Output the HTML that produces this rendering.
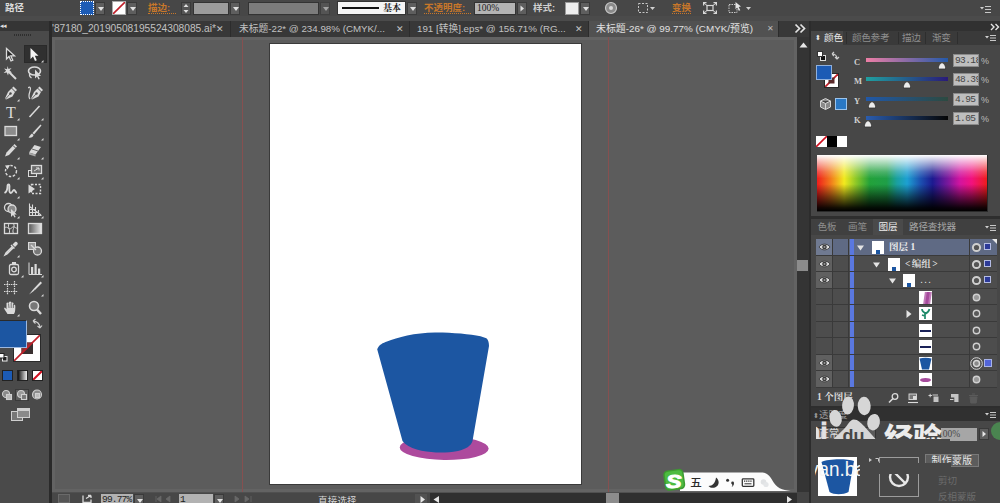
<!DOCTYPE html>
<html><head><meta charset="utf-8">
<style>
*{box-sizing:border-box;margin:0;padding:0}
html,body{width:1000px;height:503px;overflow:hidden;background:#5c5c5c;font-family:"Liberation Sans","Noto Sans CJK SC",sans-serif;font-size:11px;color:#d6d6d6}
.a{position:absolute}
#topbar{left:0;top:0;width:1000px;height:16px;background:#474747}
#topline{left:0;top:16px;width:1000px;height:5px;background:#4b4b4b}
#tabbar{left:0;top:21px;width:1000px;height:16px;background:#383838}
.tab{top:0;height:16px;font-size:9.75px;line-height:16px;color:#c2c2c2;white-space:nowrap;overflow:hidden;border-right:1px solid #2c2c2c}
#tools{left:0;top:21px;width:49px;height:482px;background:#4a4a4a}
#toolhead{left:0;top:21px;width:49px;height:10px;background:#353535}
#toolsep{left:49px;top:21px;width:3px;height:482px;background:#2a2a2a}
#canvas{left:52px;top:37px;width:744.500px;height:455px;background:#5c5c5c;border:3px solid #636363}
#artboard{left:269px;top:43px;width:313px;height:442px;background:#fff;border:1px solid #3a3a3a}
.guide{top:37px;width:1px;height:455px;background:#865050}
#vscroll{left:796.500px;top:37px;width:13.500px;height:466px;background:#343434}
#status{left:52px;top:492px;width:745px;height:11px;background:#474747;border-top:1px solid #505050}
#rsep{left:809px;top:21px;width:2px;height:482px;background:#2c2c2c}
#right{left:811px;top:21px;width:189px;height:482px;background:#474747}
.o{color:#c8772a}
.lbl{top:1px;font-size:9.5px;line-height:14px;white-space:nowrap;font-weight:700}
.dd{top:2px;width:10px;height:13px;background:#5e5e5e;border:1px solid #3a3a3a}
.dd:after{content:"";position:absolute;left:1.5px;top:4px;border:3px solid transparent;border-top:4px solid #e0e0e0}
.box{top:2px;height:13px;border:1px solid #333}
.ptab{top:0;height:14px;font-size:9.6px;line-height:14px;color:#8e8e8e;white-space:nowrap}
.val{width:26px;height:13px;background:#bebebe;border:1px solid #8a8a8a;color:#444;font-family:"Liberation Mono",monospace;font-size:9.5px;line-height:11px;letter-spacing:-0.6px;padding-left:1px;overflow:hidden;white-space:nowrap}
.pct{font-size:9px;color:#bbb;line-height:12px}
.sl{height:4px;left:866px;width:82px}
.cl{font-family:"Liberation Serif",serif;font-weight:bold;font-size:8.5px;color:#d0d0d0;line-height:10px}
.row{left:816px;width:181px;height:17px;border-bottom:1px solid #3a3a3a}
</style></head><body>
<div class="a" id="topbar"></div>
<div class="a" id="topline"></div>
<div class="a" id="tabbar"></div>
<div class="a" id="tools"></div>
<div class="a" id="toolhead"></div>
<div class="a" id="toolsep"></div>

<div class="a" style="left:52px;top:21px;width:758px;height:16px">
<div class="a tab" style="left:0;width:179px;padding-left:0;font-size:10.200px">'87180_20190508195524308085.ai*<span style="font-size:9px">✕</span></div>
<div class="a tab" style="left:179px;width:179px;padding-left:8px">未标题-22* @ 234.98% (CMYK/...<span class="a" style="right:5px;top:0;font-size:9px">✕</span></div>
<div class="a tab" style="left:358px;width:179px;padding-left:7px">191 [转换].eps* @ 156.71% (RG...<span class="a" style="right:5px;top:0;font-size:9px">✕</span></div>
<div class="a tab" style="left:537px;width:190px;padding-left:7px;background:#515151;color:#e0e0e0;height:16px;font-size:9.880px;border-right:1px solid #2c2c2c">未标题-26* @ 99.77% (CMYK/预览)<span class="a" style="right:4px;top:0;font-size:8px;color:#bbb">✕</span></div>
<svg class="a" style="left:742px;top:2px" width="14" height="12"><path d="M1.500 1.500L5.500 5.500L1.500 9.500M6.500 1.500L10.500 5.500L6.500 9.500" fill="none" stroke="#e4e4e4" stroke-width="1.700"/></svg>
</div>

<div class="a" id="canvas"></div>
<div class="a guide" style="left:242px"></div>
<div class="a guide" style="left:608px"></div>
<div class="a" id="artboard"></div>
<svg class="a" style="left:0;top:0" width="1000" height="503">
<ellipse cx="444.200" cy="448" rx="44.500" ry="12" fill="#ad4a9d" transform="rotate(.8 444 448)"/>
<path d="M377.200 349.300C379 344.500 383 343 387 341.500C397 337.300 415 332.600 435 332.400C452 332.300 470 334 480.500 336.300L486.400 338.200C488.500 340 489 343 489 346L472.500 441C471 446 466 449 458 451C450 452.500 443 452.600 436 452.400C424 452 408 449 402.500 441Z" fill="#1c56a2"/>
</svg>


<div class="a lbl" style="left:5px;color:#dcdcdc">路径</div>
<div class="a" style="left:80px;width:14px;height:14px;top:1px;background:#1c5bb5;border:1px dotted #fff"></div>
<div class="a dd" style="left:95px"></div>
<div class="a" style="left:112px;width:14px;height:14px;top:1px;background:#fff;border:1px solid #aaa;overflow:hidden"><svg width="14" height="14" style="position:absolute;left:-1px;top:-1px"><line x1="0" y1="14" x2="14" y2="0" stroke="#c0202a" stroke-width="1.6"/></svg></div>
<div class="a dd" style="left:127px"></div>
<div class="a lbl o" style="left:148px;border-bottom:1px dotted #c8772a;height:13px">描边<span style="display:inline-block;width:9px">:</span></div>
<div class="a" style="left:181px;top:2px;width:10px;height:13px;background:#555;border:1px solid #3a3a3a"><svg width="8" height="11" style="display:block"><path d="M1.5 4L4 1L6.500 4Z M1.500 7L4 10L6.500 7Z" fill="#ddd"/></svg></div>
<div class="a box" style="left:193px;width:36px;background:#9c9c9c"></div>
<div class="a dd" style="left:230px"></div>
<div class="a box" style="left:248px;width:71px;background:#7c7c7c"></div>
<div class="a dd" style="left:320px;opacity:.6"></div>
<div class="a box" style="left:337px;width:69px;background:#f4f4f4;height:14px;top:1px"><div class="a" style="left:4px;top:5px;width:37px;height:2px;background:#111"></div><div class="a" style="left:45px;top:-1px;font-family:'Liberation Serif','Noto Serif CJK SC',serif;font-weight:bold;font-size:9px;line-height:14px;color:#222;white-space:nowrap">基本</div></div>
<div class="a dd" style="left:407px"></div>
<div class="a lbl o" style="left:424px;border-bottom:1px dotted #c8772a;height:13px">不透明度<span style="display:inline-block;width:9px">:</span></div>
<div class="a box" style="left:474px;width:42px;background:#b4b4b4;color:#222;font-family:'Liberation Serif',serif;font-size:9.500px;line-height:11px;padding-left:2px">100%</div>
<div class="a" style="left:517px;top:2px;width:10px;height:13px;background:#5e5e5e;border:1px solid #3a3a3a"><svg width="8" height="11" style="display:block"><path d="M2.500 2.500L6 5.500L2.500 8.500Z" fill="#e0e0e0"/></svg></div>
<div class="a lbl" style="left:533px;color:#d0d0d0">样式<span style="display:inline-block;width:9px">:</span></div>
<div class="a" style="left:565px;width:14px;height:13px;top:2px;background:#eee;border:1px solid #999"></div>
<div class="a dd" style="left:580px"></div>
<svg class="a" style="left:600px;top:0" width="400" height="18">
<circle cx="11" cy="8" r="5.500" fill="#8a8a8a" stroke="#c8c8c8" stroke-width="1.200"/><circle cx="11" cy="8" r="2" fill="#d8d8d8"/>
<rect x="38.500" y="3.500" width="9" height="9" fill="none" stroke="#c8c8c8" stroke-dasharray="2 1.500"/><path d="M50 7l5 0l-2.500 3z" fill="#d0d0d0"/>
<g transform="translate(-2.500 0)"><path d="M105.500 2h3.500v1.300h-2.200v2.200h-1.300zM119.500 2h-3.500v1.300h2.200v2.200h1.300zM105.500 14h3.500v-1.300h-2.200v-2.200h-1.300zM119.500 14h-3.500v-1.300h2.200v-2.200h1.300z" fill="#d8d8d8"/><path d="M106.500 3l3 2.500M118.500 3l-3 2.500M106.500 13l3-2.500M118.500 13l-3-2.500" stroke="#d8d8d8"/><rect x="109.500" y="5.500" width="6" height="5" fill="none" stroke="#d8d8d8" stroke-width="1.200"/></g>
<g transform="translate(-3.500 0)"><rect x="132.500" y="4.500" width="8" height="8" fill="none" stroke="#c8c8c8" stroke-dasharray="1.500 1"/><path d="M139 2l5.500 4.500l-2.300 .5l1.600 3.200l-1.500 .6l-1.600-3.200l-1.700 1.600z" fill="#e4e4e4"/></g><path d="M146 7l5 0l-2.500 3z" fill="#d0d0d0"/>
<path d="M380 7l4 0l-2 2.500z" fill="#d0d0d0"/><path d="M385 6.500h6M385 9.500h6M385 12.500h6" stroke="#c8c8c8"/>
</svg>
<div class="a lbl o" style="left:672px;border-bottom:1px dotted #c8772a;height:13px">变换</div>

<div class="a" style="left:0;top:22px;font-size:7px;line-height:8px;color:#ddd;letter-spacing:-1px">◂◂</div>
<div class="a" style="left:14px;top:34px;width:17px;height:2px;border-top:1px dotted #2e2e2e;border-bottom:1px dotted #2e2e2e"></div>
<div class="a" style="left:24px;top:45px;width:23px;height:18px;background:#303030;border:1px solid #2a2a2a"></div>
<svg class="a" style="left:2px;top:46px" width="18" height="18" viewBox="0 0 18 18"><path d="M4.500 2.500L4.500 13L7 10.500L9 15L10.800 14.200L8.800 9.800L12.500 9.800Z" fill="#2a2a2a" stroke="#dadada" stroke-width="1.300"/></svg>
<svg class="a" style="left:26px;top:45px" width="18" height="18" viewBox="0 0 18 18"><path d="M4.500 3L4.500 14L7 11.500L9 16L10.800 15.200L8.800 10.800L12.500 10.800Z" fill="#f4f4f4"/><path d="M15 17.500l2.500 0l0-2.500z" fill="#dadada"/></svg>
<svg class="a" style="left:2px;top:64px" width="18" height="18" viewBox="0 0 18 18"><path d="M6 7L14 15" stroke="#dadada" stroke-width="2"/><path d="M5.500 2l1 3l3-1l-2 2.500l2.500 2l-3.200 0l-.8 3l-1.200-3l-3.200 .5l2.500-2.200l-2-2.300l3 .8z" fill="#dadada"/></svg>
<svg class="a" style="left:26px;top:64px" width="18" height="18" viewBox="0 0 18 18"><ellipse cx="8.500" cy="7" rx="6" ry="4" fill="none" stroke="#dadada" stroke-width="1.600"/><path d="M4 9c-1 2 0 4 1.500 5" fill="none" stroke="#dadada" stroke-width="1.300"/><path d="M9 5.500l0 9l2-2l1.500 3l1.300-.6l-1.500-3l2.700 0z" fill="#dadada"/></svg>
<svg class="a" style="left:2px;top:84px" width="18" height="18" viewBox="0 0 18 18"><path d="M11.500 2.500L15 6L13.500 7.500L10 4Z" fill="#dadada"/><path d="M9.500 4.500L13 8L10.500 12.500L4 15.500L3 14.500L6 8Z" fill="#dadada"/><circle cx="8.500" cy="9.500" r="1.200" fill="#4a4a4a"/><path d="M3.500 15L8 10" stroke="#4a4a4a" stroke-width=".8"/><path d="M15 17.500l2.500 0l0-2.500z" fill="#dadada"/></svg>
<svg class="a" style="left:28px;top:84px" width="18" height="18" viewBox="0 0 18 18"><path d="M11.500 2.500L15 6L13.500 7.500L10 4Z" fill="#dadada"/><path d="M9.500 4.500L13 8L10.500 12.500L4 15.500L3 14.500L6 8Z" fill="#dadada"/><circle cx="8.500" cy="9.500" r="1.200" fill="#4a4a4a"/><path d="M3.500 15L8 10" stroke="#4a4a4a" stroke-width=".8"/><path d="M1 4c2-2 3 0 2 3c-1 3-2 6 0 8" fill="none" stroke="#dadada" stroke-width="1.200" transform="translate(-1,0)"/></svg>
<svg class="a" style="left:2px;top:103px" width="18" height="18" viewBox="0 0 18 18"><text x="4" y="14.500" font-family="Liberation Serif,serif" font-size="16" fill="#dadada">T</text><path d="M15 17.500l2.500 0l0-2.500z" fill="#dadada"/></svg>
<svg class="a" style="left:26px;top:103px" width="18" height="18" viewBox="0 0 18 18"><path d="M3.500 14L13.500 3" stroke="#dadada" stroke-width="1.500"/><path d="M15 17.500l2.500 0l0-2.500z" fill="#dadada"/></svg>
<svg class="a" style="left:2px;top:123px" width="18" height="18" viewBox="0 0 18 18"><rect x="3" y="3.500" width="11.500" height="9" fill="#8c8c8c" stroke="#dadada" stroke-width="1.300"/><path d="M15 17.500l2.500 0l0-2.500z" fill="#dadada"/></svg>
<svg class="a" style="left:26px;top:123px" width="18" height="18" viewBox="0 0 18 18"><path d="M14.500 1.500L15.500 2.500L8 11.500L6.500 10Z" fill="#dadada"/><path d="M6 10.500L7.500 12c0 2-2.500 3-5 2.500c1.500-1 1.500-3 3.500-4z" fill="#dadada"/><path d="M15 17.500l2.500 0l0-2.500z" fill="#dadada"/></svg>
<svg class="a" style="left:2px;top:142px" width="18" height="18" viewBox="0 0 18 18"><path d="M12.500 2L15 4.500L7 13L3 14.500L4.500 10.500Z" fill="#dadada"/><path d="M11 3.500L13.500 6" stroke="#4a4a4a" stroke-width="1"/><path d="M15 17.500l2.500 0l0-2.500z" fill="#dadada"/></svg>
<svg class="a" style="left:26px;top:142px" width="18" height="18" viewBox="0 0 18 18"><path d="M8.500 3L15 5L9.500 12.500L3 10.500Z" fill="#dadada"/><path d="M3 10.500L9.500 12.500L9.500 14.500L3 12.500Z" fill="#a8a8a8"/><path d="M6 7L12 9" stroke="#4a4a4a" stroke-width=".8"/><path d="M15 17.500l2.500 0l0-2.500z" fill="#dadada"/></svg>
<svg class="a" style="left:2px;top:162px" width="18" height="18" viewBox="0 0 18 18"><circle cx="9" cy="9" r="5.500" fill="none" stroke="#dadada" stroke-width="1.400" stroke-dasharray="2.500 1.600"/><path d="M3 3.500L8 3L5.500 7.500Z" fill="#dadada"/><path d="M15 17.500l2.500 0l0-2.500z" fill="#dadada"/></svg>
<svg class="a" style="left:26px;top:162px" width="18" height="18" viewBox="0 0 18 18"><rect x="2.500" y="8.500" width="8" height="6" fill="none" stroke="#dadada"/><rect x="5.500" y="3.500" width="10" height="8" fill="#6a6a6a" stroke="#dadada" stroke-width="1.300"/><path d="M8 9L13 6M13 6l-3 0M13 6l0 2.500" stroke="#dadada" fill="none"/><path d="M15 17.500l2.500 0l0-2.500z" fill="#dadada"/></svg>
<svg class="a" style="left:2px;top:181px" width="18" height="18" viewBox="0 0 18 18"><path d="M2.500 12c2-1 3-4 3-7c0-2 2-2 2 0c0 3-1 6 1 7c2 .5 2-3 3.500-3c1.500 0 1 3 3 2.500" fill="none" stroke="#dadada" stroke-width="1.800"/><path d="M15 17.500l2.500 0l0-2.500z" fill="#dadada"/></svg>
<svg class="a" style="left:26px;top:181px" width="18" height="18" viewBox="0 0 18 18"><rect x="5.500" y="3.500" width="9" height="9" fill="none" stroke="#dadada" stroke-dasharray="2 1.500" stroke-width="1.400"/><path d="M2.500 3.500L9 8L2.500 12.500Z" fill="#dadada"/></svg>
<svg class="a" style="left:2px;top:201px" width="18" height="18" viewBox="0 0 18 18"><circle cx="6.500" cy="6.500" r="4" fill="none" stroke="#dadada" stroke-width="1.300"/><circle cx="10" cy="8" r="4" fill="#8a8a8a" stroke="#dadada" stroke-width="1.300"/><path d="M9 8l0 8l2-2l1.500 2.500l1.200-.6l-1.500-2.500l2.600 0z" fill="#dadada"/><path d="M15 17.500l2.500 0l0-2.500z" fill="#dadada"/></svg>
<svg class="a" style="left:26px;top:201px" width="18" height="18" viewBox="0 0 18 18"><path d="M3.500 2.500L3.500 14.500L15.500 14.500M3.500 5.500L15 14M6.500 3.500L6.500 14.500M9.500 6L9.500 14.500M12.500 9L12.500 14.500M3.500 8.500L10 8.500M3.500 11.500L13 11.500" stroke="#dadada" fill="none" stroke-width="1.100"/><path d="M15 17.500l2.500 0l0-2.500z" fill="#dadada"/></svg>
<svg class="a" style="left:2px;top:220px" width="18" height="18" viewBox="0 0 18 18"><rect x="2.500" y="3.500" width="13" height="10" fill="none" stroke="#dadada" stroke-width="1.300"/><path d="M2.500 8c3-3 4 3 7 0s4 1 6 0M7 3.500c-2 4 2 6 0 10M11.500 3.500c2 4-2 6 0 10" fill="none" stroke="#dadada"/></svg>
<svg class="a" style="left:26px;top:220px" width="18" height="18" viewBox="0 0 18 18"><defs><linearGradient id="tg"><stop offset="0" stop-color="#555"/><stop offset="1" stop-color="#e8e8e8"/></linearGradient></defs><rect x="2.500" y="3.500" width="13" height="10" fill="url(#tg)" stroke="#dadada" stroke-width="1.300"/></svg>
<svg class="a" style="left:2px;top:240px" width="18" height="18" viewBox="0 0 18 18"><path d="M13 2c1.500-1 3.500 1 2.500 2.500L13 7L10.500 4.500Z" fill="#dadada"/><path d="M9 5l3.500 3.500M10.500 6.500L4 13L3 15L5 14L11.500 7.500" stroke="#dadada" fill="none" stroke-width="1.400"/><path d="M15 17.500l2.500 0l0-2.500z" fill="#dadada"/></svg>
<svg class="a" style="left:26px;top:240px" width="18" height="18" viewBox="0 0 18 18"><rect x="2.500" y="2.500" width="7" height="7" fill="#9a9a9a" stroke="#dadada"/><circle cx="11.500" cy="11" r="4" fill="#777" stroke="#dadada" stroke-width="1.300"/><path d="M5 5l5 5" stroke="#dadada" stroke-width="1.200"/></svg>
<svg class="a" style="left:6px;top:260px" width="18" height="18" viewBox="0 0 18 18"><rect x="3.500" y="4.500" width="9" height="10" rx="1.500" fill="none" stroke="#dadada" stroke-width="1.300"/><circle cx="8" cy="9.500" r="2.300" fill="none" stroke="#dadada" stroke-width="1.300"/><rect x="6" y="2" width="4" height="2.500" fill="#dadada"/><path d="M15 17.500l2.500 0l0-2.500z" fill="#dadada"/></svg>
<svg class="a" style="left:26px;top:260px" width="18" height="18" viewBox="0 0 18 18"><path d="M3 2.500L3 14.500L16 14.500" stroke="#dadada" fill="none"/><rect x="5" y="7" width="2.200" height="7" fill="#dadada"/><rect x="8.500" y="4" width="2.200" height="10" fill="#dadada"/><rect x="12" y="8.500" width="2.200" height="5.500" fill="#dadada"/><path d="M15 17.500l2.500 0l0-2.500z" fill="#dadada"/></svg>
<svg class="a" style="left:2px;top:279px" width="18" height="18" viewBox="0 0 18 18"><path d="M5.500 2L5.500 16M12.500 2L12.500 16M2 5.500L16 5.500M2 12.500L16 12.500" stroke="#dadada" stroke-width="1.200" fill="none" stroke-dasharray="1.500 .8"/></svg>
<svg class="a" style="left:26px;top:279px" width="18" height="18" viewBox="0 0 18 18"><path d="M14.500 2.500L16 4L9 11L7 10.500Z" fill="#dadada"/><path d="M7.500 10L8.500 11.500L3 15.500Z" fill="#dadada"/><path d="M15 17.500l2.500 0l0-2.500z" fill="#dadada"/></svg>
<svg class="a" style="left:2px;top:299px" width="18" height="18" viewBox="0 0 18 18"><path d="M5.500 15c-1-2-3-4-3.500-6c.8-.8 1.800 0 2.500 1.200L4.500 4c.8-1 1.800-.6 2 .2L7 3c.8-1 2-.6 2.200 .3l.3 .7c.8-.8 2-.4 2 .6l0 1.400c.8-.6 1.800-.2 1.800 .8c0 3 .2 6-1.300 8.200z" fill="#dadada"/><path d="M6.500 4.500L7 9M9.200 4L9.200 9M11.500 5L11.300 9" stroke="#4a4a4a" stroke-width=".7"/><path d="M15 17.500l2.500 0l0-2.500z" fill="#dadada"/></svg>
<svg class="a" style="left:26px;top:299px" width="18" height="18" viewBox="0 0 18 18"><circle cx="8" cy="7" r="4.500" fill="#777" stroke="#dadada" stroke-width="1.600"/><path d="M11 10.500L15 15" stroke="#dadada" stroke-width="2.500"/></svg>
<div class="a" style="left:13px;top:334px;width:28px;height:28px;background:#fff;border:1px solid #2a2a2a;overflow:hidden"><svg width="26" height="26" style="display:block"><rect x="7.500" y="7.500" width="11.500" height="11.500" fill="#3a3030"/><path d="M7.500 7.500h11.500l-11.500 11.500z" fill="#8a3434"/><line x1="0" y1="26" x2="26" y2="0" stroke="#c0202a" stroke-width="1.600"/></svg></div>
<div class="a" style="left:-1px;top:320px;width:28px;height:27.500px;background:#1c56a2;border:1px solid #9cb8e0;border-top-color:#2a2a2a"></div>
<svg class="a" style="left:30px;top:318px" width="14" height="14"><path d="M3 3c4 0 7 3 7 7M3 3l2.500-2M3 3l2.500 2.500M10 10l-2.500-2M10 10l2-2.500" stroke="#d0d0d0" fill="none" stroke-width="1.200"/></svg>
<svg class="a" style="left:-1px;top:353px" width="10" height="10"><rect x="3.500" y="3.500" width="4.500" height="4.500" fill="#222" stroke="#eee"/><rect x=".5" y=".5" width="4.500" height="4.500" fill="#fff" stroke="#222"/></svg>
<div class="a" style="left:2px;top:370px;width:11px;height:11px;background:#1c5bb5;border:1px solid #222"></div>
<div class="a" style="left:17px;top:370px;width:11px;height:11px;background:linear-gradient(90deg,#111,#eee);border:1px solid #222"></div>
<div class="a" style="left:32px;top:370px;width:11px;height:11px;background:#fff;border:1px solid #222;overflow:hidden"><svg width="9" height="9" style="display:block"><line x1="0" y1="9" x2="9" y2="0" stroke="#d01020" stroke-width="2"/></svg></div>
<div class="a" style="left:15px;top:389px;width:14px;height:12px;background:#5c5c5c;border:1px solid #3a3a3a"></div>
<svg class="a" style="left:0;top:388px" width="48" height="14"><g fill="none" stroke="#cfcfcf" stroke-width="1.100"><circle cx="6" cy="6" r="3.500" fill="#8a8a8a"/><rect x="6.500" y="6.500" width="5" height="5" fill="#bbb"/><circle cx="21" cy="6" r="3.500" fill="#999"/><rect x="21.500" y="6.500" width="5" height="5" fill="#777"/><circle cx="37" cy="6.500" r="4.500" fill="#8a8a8a"/><rect x="35.500" y="5.500" width="4" height="4" fill="#bbb"/></g></svg>
<svg class="a" style="left:10px;top:407px" width="22" height="16"><rect x="1.500" y="4.500" width="11" height="9" fill="#777" stroke="#cfcfcf"/><rect x="7.500" y="1.500" width="12" height="9" fill="#8a8a8a" stroke="#cfcfcf"/><rect x="7.500" y="1.500" width="12" height="2.500" fill="#cfcfcf"/></svg>

<div class="a" id="vscroll"></div><div class="a" style="left:796.500px;top:492px;width:12.500px;height:11px;background:#444"></div>
<svg class="a" style="left:797px;top:37px" width="14" height="14"><path d="M2.500 10.500L6.500 5.500L10.500 10.500Z" fill="#e6e6e6"/></svg>
<div class="a" style="left:797px;top:260px;width:11px;height:11px;background:#8c8c8c"></div>
<div class="a" id="status"></div>
<div class="a" style="left:430px;top:493px;width:367px;height:10px;background:#2f2f2f"></div>
<div class="a" style="left:606px;top:493px;width:13px;height:10px;background:#8c8c8c"></div>
<svg class="a" style="left:52px;top:493px" width="760" height="10">
<rect x="6.500" y="1.500" width="11" height="8" fill="#555" stroke="#6a6a6a"/>
<path d="M31 2.500l0 7l8 0l0-3M34 5.500l5-3M39 2.500l-3 0M39 2.500l0 2.500" stroke="#d8d8d8" fill="none" stroke-width="1.300"/>
<path d="M104 3l0 6M109 3l-4 3l4 3zM118 3l-4 3l4 3z" fill="#686868" stroke="#686868" stroke-width=".8"/>
<path d="M183 3l4 3l-4 3zM193 3l4 3l-4 3zM199 3l0 6" fill="#686868" stroke="#686868" stroke-width=".8"/>
<rect x="363" y="1" width="12" height="10" fill="#525252"/><path d="M368.500 3L373 6.500L368.500 10Z" fill="#e6e6e6"/>
<path d="M387 3L381.500 6.500L387 10Z" fill="#e6e6e6"/>
<path d="M735 3L740 6.500L735 10Z" fill="#e6e6e6"/>
</svg>
<div class="a" style="left:101px;top:494px;width:32px;height:10px;background:#b2b2b2;color:#222;font-family:'Liberation Mono',monospace;font-size:9.500px;letter-spacing:-.8px;line-height:11px;padding-left:1px;overflow:hidden;white-space:nowrap">99.77%</div>
<div class="a dd" style="left:134px;top:494px;height:10px"></div>
<div class="a" style="left:179px;top:494px;width:34px;height:10px;background:#b2b2b2;color:#222;font-family:'Liberation Mono',monospace;font-size:9.500px;line-height:11px;padding-left:1px;overflow:hidden">1</div>
<div class="a dd" style="left:214px;top:494px;height:10px"></div>
<div class="a" style="left:318px;top:495px;font-size:9.500px;line-height:11px;color:#d8d8d8;letter-spacing:.2px;white-space:nowrap">直接选择</div>

<svg class="a" style="left:655px;top:462px" width="145" height="34" viewBox="655 462 145 34">
<path d="M680 472.500L761 472.500C768 472.500 770.500 477 774 483C778 489 785 491 794 491L680 491Z" fill="#fcfcfc"/>
<g transform="rotate(-8 674.200 479.800)">
<rect x="664" y="469.600" width="20.500" height="20.500" rx="4.500" fill="#3c9a30"/>
<rect x="665.500" y="471" width="17.500" height="17.500" rx="3.500" fill="#4dbb40"/>
</g>
<text x="666" y="487.600" font-family="Liberation Sans,sans-serif" font-weight="bold" font-style="italic" font-size="17.500" fill="#fff" stroke="#fff" stroke-width=".9" textLength="15.500" lengthAdjust="spacingAndGlyphs">S</text>
<text x="690.300" y="486.600" font-family="Noto Sans CJK SC,sans-serif" font-weight="500" font-size="11.500" fill="#2a2a2a">五</text>
<path d="M716 477.500C719.500 480 720 485.500 715 487.500C712.500 488.300 710 487.800 708.500 486C712.500 486 715.500 482.500 716 477.500Z" fill="#333"/>
<circle cx="727.600" cy="480.200" r="1.500" fill="#333"/><circle cx="732.600" cy="483" r="1.400" fill="#333"/><path d="M733.800 483C734.200 485 733 486.500 731.500 487C732.500 486 732.600 485 732 484Z" fill="#333"/>
<rect x="742.300" y="478.800" width="11.500" height="7.600" rx=".8" fill="none" stroke="#333" stroke-width="1.300"/><path d="M744 481.200h8.500" stroke="#333" stroke-width="1.200" stroke-dasharray="1.300 .8"/><path d="M744.500 483.800h7" stroke="#333" stroke-width="1"/>
<circle cx="763.500" cy="482" r="2.800" fill="#e0e2e4"/><circle cx="766" cy="484.500" r="2.600" fill="#e4e6e8"/>
</svg>

<div class="a" id="rsep"></div><div class="a" id="right"></div>
<div class="a" style="left:811px;top:21px;width:189px;height:10px;background:#313131"></div>
<svg class="a" style="left:990px;top:23px" width="10" height="8"><path d="M1 1L4 4L1 7M5.500 1L8.500 4L5.500 7" fill="none" stroke="#e4e4e4" stroke-width="1.400"/></svg>
<div class="a" style="left:811px;top:31px;width:189px;height:14px;background:#3a3a3a"></div>
<div class="a" style="left:811px;top:31px;width:32px;height:14px;background:#474747"></div>
<div class="a ptab" style="left:815px;top:31px;color:#e8e8e8"><span style="font-size:7px;position:relative;top:-1px;margin-right:3px">⬍</span>颜色</div>
<div class="a ptab" style="left:852px;top:31px;letter-spacing:-.3px">颜色参考</div>
<div class="a ptab" style="left:902px;top:31px;letter-spacing:-.3px">描边</div>
<div class="a ptab" style="left:932px;top:31px;letter-spacing:-.3px">渐变</div>
<div class="a" style="left:846px;top:32px;width:1px;height:12px;background:#2e2e2e"></div>
<div class="a" style="left:898px;top:32px;width:1px;height:12px;background:#2e2e2e"></div>
<div class="a" style="left:925px;top:32px;width:1px;height:12px;background:#2e2e2e"></div>
<div class="a" style="left:957px;top:32px;width:1px;height:12px;background:#2e2e2e"></div>
<svg class="a" style="left:984px;top:33px" width="14" height="10"><path d="M1 3l4 0l-2 2.500z" fill="#d0d0d0"/><path d="M6 2.500h6M6 5h6M6 7.500h6" stroke="#c8c8c8"/></svg>
<svg class="a" style="left:815px;top:49px" width="30" height="14"><rect x="5.500" y="6.500" width="5" height="5" fill="#111" stroke="#ddd"/><rect x="2.500" y="2.500" width="5" height="5" fill="#fff" stroke="#333"/><path d="M17 5c3 0 5 2 5 5M17 5l2-2M17 5l2 2M22 10l-2-2M22 10l2-2" stroke="#d0d0d0" fill="none" stroke-width="1.100"/></svg>
<div class="a" style="left:824px;top:73px;width:15px;height:15px;background:#fff;border:1px solid #2a2a2a;overflow:hidden"><svg width="13" height="13" style="display:block"><line x1="0" y1="13" x2="13" y2="0" stroke="#c0202a" stroke-width="1.800"/><rect x="3.500" y="3.500" width="6" height="6" fill="#5a2a2a"/></svg></div>
<div class="a" style="left:816px;top:65px;width:16px;height:15px;background:#1c5bb5;border:1px solid #8fb0dc"></div>
<svg class="a" style="left:819px;top:97px" width="13" height="14"><path d="M6.500 1.500L11.500 4L11.500 10L6.500 12.500L1.500 10L1.500 4Z M1.500 4L6.500 6.500L11.500 4M6.500 6.500L6.500 12.500" fill="#8a8a8a" stroke="#d6d6d6" stroke-width="1"/></svg>
<div class="a" style="left:835px;top:98px;width:12px;height:12px;background:#2a78c4;border:1px solid #9cc4ec"></div>

<div class="a cl" style="left:854px;top:57px">C</div>
<div class="a sl" style="top:58px;background:linear-gradient(90deg,#ee7ea6,#2459a8)"></div>
<svg class="a" style="left:937px;top:62px" width="10" height="8"><path d="M5 .5C7 2 8.500 3 8.500 5.500L8.500 7L1.500 7L1.500 5.500C1.500 3 3 2 5 .5Z" fill="#ececec" stroke="#333" stroke-width=".8"/></svg>
<div class="a cl" style="left:854px;top:76px">M</div>
<div class="a sl" style="top:77px;background:linear-gradient(90deg,#1fa0a0,#2a1a78)"></div>
<svg class="a" style="left:902px;top:81px" width="10" height="8"><path d="M5 .5C7 2 8.500 3 8.500 5.500L8.500 7L1.500 7L1.500 5.500C1.500 3 3 2 5 .5Z" fill="#ececec" stroke="#333" stroke-width=".8"/></svg>
<div class="a cl" style="left:854px;top:96px">Y</div>
<div class="a sl" style="top:97px;background:linear-gradient(90deg,#2058a8,#2c4a40)"></div>
<svg class="a" style="left:867px;top:101px" width="10" height="8"><path d="M5 .5C7 2 8.500 3 8.500 5.500L8.500 7L1.500 7L1.500 5.500C1.500 3 3 2 5 .5Z" fill="#ececec" stroke="#333" stroke-width=".8"/></svg>
<div class="a cl" style="left:854px;top:115px">K</div>
<div class="a sl" style="top:116px;background:linear-gradient(90deg,#2a5cae,#050505)"></div>
<svg class="a" style="left:863px;top:120px" width="10" height="8"><path d="M5 .5C7 2 8.500 3 8.500 5.500L8.500 7L1.500 7L1.500 5.500C1.500 3 3 2 5 .5Z" fill="#ececec" stroke="#333" stroke-width=".8"/></svg>
<div class="a val" style="left:953px;top:54px">93.18</div>
<div class="a pct" style="left:981px;top:55px">%</div>
<div class="a val" style="left:953px;top:73px">48.39</div>
<div class="a pct" style="left:981px;top:74px">%</div>
<div class="a val" style="left:953px;top:93px">4.95</div>
<div class="a pct" style="left:981px;top:94px">%</div>
<div class="a val" style="left:953px;top:112px">1.05</div>
<div class="a pct" style="left:981px;top:113px">%</div>
<div class="a" style="left:816px;top:136px;width:11px;height:11px;background:#fff;overflow:hidden"><svg width="11" height="11" style="display:block"><line x1="0" y1="11" x2="11" y2="0" stroke="#d01020" stroke-width="1.600"/></svg></div>
<div class="a" style="left:827px;top:136px;width:10px;height:11px;background:#000"></div>
<div class="a" style="left:837px;top:136px;width:10px;height:11px;background:#fff"></div>
<div class="a" style="left:817px;top:155px;width:171px;height:57px;background:#2a2a2a"><div class="a" style="left:0;top:0;width:170px;height:56px;background:linear-gradient(90deg,#ee1c1c 0%,#f27a1c 8%,#f2ea1e 16%,#8cc828 23%,#23a23a 31%,#1f9e48 41%,#1aa0a0 47%,#1da0d2 53%,#1c50b0 61%,#1c1a90 68%,#7a189c 77%,#d214a0 84%,#f2127e 91%,#ee1c1c 100%)"></div><div class="a" style="left:0;top:0;width:170px;height:56px;background:linear-gradient(180deg,#fff 0%,rgba(255,255,255,.72) 10%,rgba(255,255,255,.2) 30%,rgba(255,255,255,0) 42%,rgba(0,0,0,0) 52%,rgba(0,0,0,.5) 74%,rgba(0,0,0,.92) 94%,#000 100%)"></div></div>
<div class="a" style="left:811px;top:216px;width:189px;height:3px;background:#2e2e2e"></div>
<div class="a" style="left:811px;top:219px;width:189px;height:16px;background:#404040"></div>
<div class="a" style="left:873px;top:219px;width:30px;height:16px;background:#4a4a4a"></div>
<div class="a ptab" style="left:817.5px;top:220px">色板</div>
<div class="a ptab" style="left:848px;top:220px">画笔</div>
<div class="a ptab" style="left:878.5px;top:220px;color:#eee">图层</div>
<div class="a ptab" style="left:909px;top:220px;color:#a8a8a8;letter-spacing:-.2px">路径查找器</div>
<svg class="a" style="left:984px;top:223px" width="14" height="10"><path d="M1 3l4 0l-2 2.500z" fill="#d0d0d0"/><path d="M6 2.500h6M6 5h6M6 7.500h6" stroke="#c8c8c8"/></svg>
<div class="a row" style="top:239px;height:17px;background:#5f6a84"><div class="a" style="left:16px;top:0;width:1px;height:100%;background:#3a3a3a"></div><div class="a" style="left:32px;top:0;width:1px;height:100%;background:#3a3a3a"></div><div class="a" style="left:34px;top:0;width:4px;height:100%;background:#5a78e0"></div><div class="a" style="left:153px;top:0;width:1px;height:100%;background:#3a3a3a"></div><div class="a" style="left:0;top:0;width:16px;height:100%;background:rgba(255,255,255,.11)"></div><svg class="a" style="left:2px;top:3px" width="13" height="10"><path d="M1 5C3.500 1.200 9.500 1.200 12 5C9.500 8.800 3.500 8.800 1 5Z" fill="#dcdcdc" stroke="#2e2e2e" stroke-width=".8"/><circle cx="6.500" cy="5" r="2.300" fill="#3a3a3a"/><circle cx="6.500" cy="5" r="1" fill="#999"/></svg><svg class="a" style="left:41px;top:6px" width="7" height="6"><path d="M0 .5L7 .5L3.500 5.500Z" fill="#e4e4e4"/></svg><div class="a" style="left:56px;top:2px;width:12px;height:13px;background:#fff;overflow:hidden"><div class="a" style="left:4px;top:9px;width:4px;height:4px;background:#1c56a2"></div></div><div class="a" style="left:73px;top:1px;font-family:'Liberation Serif','Noto Serif CJK SC',serif;font-size:9.500px;line-height:14px;color:#eee;white-space:nowrap;font-weight:bold">图层 1</div><svg class="a" style="left:154px;top:2px" width="13" height="13"><circle cx="6.500" cy="6.500" r="3.600" fill="#555" stroke="#cfcfcf" stroke-width="2"/></svg><div class="a" style="left:168px;top:4px;width:7px;height:7px;background:#2c3a98;border:1px solid #b4bce4"></div></div>
<div class="a row" style="top:256px;height:16px;background:#4d4d4d"><div class="a" style="left:16px;top:0;width:1px;height:100%;background:#3a3a3a"></div><div class="a" style="left:32px;top:0;width:1px;height:100%;background:#3a3a3a"></div><div class="a" style="left:34px;top:0;width:4px;height:100%;background:#5a78e0"></div><div class="a" style="left:153px;top:0;width:1px;height:100%;background:#3a3a3a"></div><div class="a" style="left:0;top:0;width:16px;height:100%;background:rgba(255,255,255,.11)"></div><svg class="a" style="left:2px;top:3px" width="13" height="10"><path d="M1 5C3.500 1.200 9.500 1.200 12 5C9.500 8.800 3.500 8.800 1 5Z" fill="#dcdcdc" stroke="#2e2e2e" stroke-width=".8"/><circle cx="6.500" cy="5" r="2.300" fill="#3a3a3a"/><circle cx="6.500" cy="5" r="1" fill="#999"/></svg><svg class="a" style="left:57px;top:6px" width="7" height="6"><path d="M0 .5L7 .5L3.500 5.500Z" fill="#e4e4e4"/></svg><div class="a" style="left:72px;top:2px;width:12px;height:13px;background:#fff;overflow:hidden"><div class="a" style="left:4px;top:9px;width:4px;height:4px;background:#1c56a2"></div></div><div class="a" style="left:89px;top:1px;font-family:'Liberation Serif','Noto Serif CJK SC',serif;font-size:9.500px;line-height:14px;color:#ddd;white-space:nowrap;font-weight:bold;word-spacing:-1px">&lt; 编组 &gt;</div><svg class="a" style="left:154px;top:2px" width="13" height="13"><circle cx="6.500" cy="6.500" r="3.600" fill="#555" stroke="#cfcfcf" stroke-width="2"/></svg><div class="a" style="left:168px;top:4px;width:7px;height:7px;background:#2c3a98;border:1px solid #b4bce4"></div></div>
<div class="a row" style="top:272px;height:17px;background:#4d4d4d"><div class="a" style="left:16px;top:0;width:1px;height:100%;background:#3a3a3a"></div><div class="a" style="left:32px;top:0;width:1px;height:100%;background:#3a3a3a"></div><div class="a" style="left:34px;top:0;width:4px;height:100%;background:#5a78e0"></div><div class="a" style="left:153px;top:0;width:1px;height:100%;background:#3a3a3a"></div><div class="a" style="left:0;top:0;width:16px;height:100%;background:rgba(255,255,255,.11)"></div><svg class="a" style="left:2px;top:3px" width="13" height="10"><path d="M1 5C3.500 1.200 9.500 1.200 12 5C9.500 8.800 3.500 8.800 1 5Z" fill="#dcdcdc" stroke="#2e2e2e" stroke-width=".8"/><circle cx="6.500" cy="5" r="2.300" fill="#3a3a3a"/><circle cx="6.500" cy="5" r="1" fill="#999"/></svg><svg class="a" style="left:73px;top:6px" width="7" height="6"><path d="M0 .5L7 .5L3.500 5.500Z" fill="#e4e4e4"/></svg><div class="a" style="left:87px;top:2px;width:12px;height:13px;background:#fff;overflow:hidden"><div class="a" style="left:4px;top:9px;width:4px;height:4px;background:#1c56a2"></div></div><div class="a" style="left:104px;top:0px;font-size:11px;line-height:14px;color:#ddd;letter-spacing:1px">...</div><svg class="a" style="left:154px;top:2px" width="13" height="13"><circle cx="6.500" cy="6.500" r="3.600" fill="#555" stroke="#cfcfcf" stroke-width="2"/></svg><div class="a" style="left:168px;top:4px;width:7px;height:7px;background:#2c3a98;border:1px solid #b4bce4"></div></div>
<div class="a row" style="top:289px;height:16px;background:#4d4d4d"><div class="a" style="left:16px;top:0;width:1px;height:100%;background:#3a3a3a"></div><div class="a" style="left:32px;top:0;width:1px;height:100%;background:#3a3a3a"></div><div class="a" style="left:34px;top:0;width:4px;height:100%;background:#5a78e0"></div><div class="a" style="left:153px;top:0;width:1px;height:100%;background:#3a3a3a"></div><div class="a" style="left:103px;top:2px;width:13px;height:13px;background:#fff;overflow:hidden"><div class="a" style="left:5px;top:1px;width:7px;height:12px;background:#c07ab8;transform:skewX(-8deg)"></div><div class="a" style="left:7px;top:1px;width:3px;height:12px;background:#a64b9c;transform:skewX(-8deg)"></div></div><svg class="a" style="left:154px;top:2px" width="13" height="13"><circle cx="6.500" cy="6.500" r="3.200" fill="#9a9a9a" stroke="#d0d0d0" stroke-width="1.400"/></svg></div>
<div class="a row" style="top:305px;height:17px;background:#4d4d4d"><div class="a" style="left:16px;top:0;width:1px;height:100%;background:#3a3a3a"></div><div class="a" style="left:32px;top:0;width:1px;height:100%;background:#3a3a3a"></div><div class="a" style="left:34px;top:0;width:4px;height:100%;background:#5a78e0"></div><div class="a" style="left:153px;top:0;width:1px;height:100%;background:#3a3a3a"></div><svg class="a" style="left:89.5px;top:4.500px" width="6" height="8"><path d="M.5 0L5.500 4L.5 8Z" fill="#e4e4e4"/></svg><div class="a" style="left:103px;top:2px;width:13px;height:13px;background:#fff;overflow:hidden"><svg width="13" height="13"><path d="M6 12L6 5M6 6C4 5 3 4 3 2M6 7C8 6 10 4 10.500 2M6 9L3 8" stroke="#1f8a6a" stroke-width="1.700" fill="none"/></svg></div><svg class="a" style="left:154px;top:2px" width="13" height="13"><circle cx="6.500" cy="6.500" r="3.200" fill="#5a5a5a" stroke="#d0d0d0" stroke-width="1.400"/></svg></div>
<div class="a row" style="top:322px;height:16px;background:#4d4d4d"><div class="a" style="left:16px;top:0;width:1px;height:100%;background:#3a3a3a"></div><div class="a" style="left:32px;top:0;width:1px;height:100%;background:#3a3a3a"></div><div class="a" style="left:34px;top:0;width:4px;height:100%;background:#5a78e0"></div><div class="a" style="left:153px;top:0;width:1px;height:100%;background:#3a3a3a"></div><div class="a" style="left:103px;top:2px;width:13px;height:13px;background:#fff;overflow:hidden"><div class="a" style="left:1px;top:5.500px;width:11px;height:2px;background:#1a2258"></div></div><svg class="a" style="left:154px;top:2px" width="13" height="13"><circle cx="6.500" cy="6.500" r="3.200" fill="#5a5a5a" stroke="#d0d0d0" stroke-width="1.400"/></svg></div>
<div class="a row" style="top:338px;height:17px;background:#4d4d4d"><div class="a" style="left:16px;top:0;width:1px;height:100%;background:#3a3a3a"></div><div class="a" style="left:32px;top:0;width:1px;height:100%;background:#3a3a3a"></div><div class="a" style="left:34px;top:0;width:4px;height:100%;background:#5a78e0"></div><div class="a" style="left:153px;top:0;width:1px;height:100%;background:#3a3a3a"></div><div class="a" style="left:103px;top:2px;width:13px;height:13px;background:#fff;overflow:hidden"><div class="a" style="left:1px;top:5.500px;width:11px;height:2px;background:#1a2258"></div></div><svg class="a" style="left:154px;top:2px" width="13" height="13"><circle cx="6.500" cy="6.500" r="3.200" fill="#5a5a5a" stroke="#d0d0d0" stroke-width="1.400"/></svg></div>
<div class="a row" style="top:355px;height:16px;background:#4d4d4d"><div class="a" style="left:16px;top:0;width:1px;height:100%;background:#3a3a3a"></div><div class="a" style="left:32px;top:0;width:1px;height:100%;background:#3a3a3a"></div><div class="a" style="left:34px;top:0;width:4px;height:100%;background:#5a78e0"></div><div class="a" style="left:153px;top:0;width:1px;height:100%;background:#3a3a3a"></div><div class="a" style="left:0;top:0;width:16px;height:100%;background:rgba(255,255,255,.11)"></div><svg class="a" style="left:2px;top:3px" width="13" height="10"><path d="M1 5C3.500 1.200 9.500 1.200 12 5C9.500 8.800 3.500 8.800 1 5Z" fill="#dcdcdc" stroke="#2e2e2e" stroke-width=".8"/><circle cx="6.500" cy="5" r="2.300" fill="#3a3a3a"/><circle cx="6.500" cy="5" r="1" fill="#999"/></svg><div class="a" style="left:103px;top:2px;width:13px;height:13px;background:#fff;overflow:hidden"><svg width="13" height="13"><path d="M.5 1.500C4 .5 9 .5 12.500 1.500L10 12.500L3 12.500Z" fill="#1c56a2"/></svg></div><svg class="a" style="left:153px;top:1px" width="15" height="15"><circle cx="7.500" cy="7.500" r="5.800" fill="none" stroke="#d8d8d8" stroke-width="1"/><circle cx="7.500" cy="7.500" r="3" fill="#8a8a8a" stroke="#d8d8d8" stroke-width="1.500"/></svg><div class="a" style="left:168px;top:4px;width:8px;height:8px;background:#5264d8;border:1px solid #a8b4e8"></div></div>
<div class="a row" style="top:371px;height:17px;background:#4d4d4d"><div class="a" style="left:16px;top:0;width:1px;height:100%;background:#3a3a3a"></div><div class="a" style="left:32px;top:0;width:1px;height:100%;background:#3a3a3a"></div><div class="a" style="left:34px;top:0;width:4px;height:100%;background:#5a78e0"></div><div class="a" style="left:153px;top:0;width:1px;height:100%;background:#3a3a3a"></div><div class="a" style="left:0;top:0;width:16px;height:100%;background:rgba(255,255,255,.11)"></div><svg class="a" style="left:2px;top:3px" width="13" height="10"><path d="M1 5C3.500 1.200 9.500 1.200 12 5C9.500 8.800 3.500 8.800 1 5Z" fill="#dcdcdc" stroke="#2e2e2e" stroke-width=".8"/><circle cx="6.500" cy="5" r="2.300" fill="#3a3a3a"/><circle cx="6.500" cy="5" r="1" fill="#999"/></svg><div class="a" style="left:103px;top:2px;width:13px;height:13px;background:#fff;overflow:hidden"><div class="a" style="left:1px;top:4.500px;width:11px;height:4px;border-radius:50%;background:#a64b9c"></div></div><svg class="a" style="left:154px;top:2px" width="13" height="13"><circle cx="6.500" cy="6.500" r="3.200" fill="#9a9a9a" stroke="#d0d0d0" stroke-width="1.400"/></svg></div>
<svg class="a" style="left:992px;top:239px" width="5" height="5"><path d="M0 0L5 0L5 5Z" fill="#e8e8e8"/></svg>
<div class="a" style="left:811px;top:388px;width:189px;height:18px;background:#474747"></div>
<div class="a" style="left:817px;top:390px;font-family:'Liberation Serif','Noto Serif CJK SC',serif;font-size:9.500px;line-height:14px;color:#ddd;white-space:nowrap;font-weight:bold">1 个图层</div>
<svg class="a" style="left:885px;top:390px" width="100" height="16">
<circle cx="10" cy="6.500" r="2.800" fill="none" stroke="#dcdcdc" stroke-width="1.300"/><path d="M8 8.500L4 12.500" stroke="#dcdcdc" stroke-width="1.600"/>
<rect x="24" y="4" width="7.500" height="5.500" fill="#777" stroke="#dcdcdc" stroke-width=".9"/><path d="M23 12.500h10" stroke="#dcdcdc" stroke-width="1.100"/><rect x="28" y="6" width="3.500" height="3.500" fill="#dcdcdc"/>
<path d="M43.500 5.500h3.500M45.200 3.800v3.500" stroke="#dcdcdc" stroke-width=".9"/><rect x="48.500" y="6.500" width="5" height="5.500" fill="#c4c4c4"/><path d="M47.500 5h5.500" stroke="#dcdcdc" stroke-width=".9"/>
<path d="M66 4h7.500l0 8l-4.200 0l0-4.500l-3.300 0z" fill="#c4c4c4"/><path d="M65 9.500l3.500 0" stroke="#dcdcdc" stroke-width=".9"/>
<path d="M85 7h7l-.8 6h-5.400zM84 5.500h9M87 4h3" fill="#5a5a5a" stroke="#5a5a5a"/>
</svg>
<div class="a" style="left:811px;top:406px;width:189px;height:2px;background:#2e2e2e"></div>
<div class="a" style="left:811px;top:408px;width:189px;height:13px;background:#303030"></div>
<div class="a ptab" style="left:813px;top:408px;color:#9a9a9a;font-size:9.500px"><span style="font-size:7px">⬍</span>透明度</div>
<svg class="a" style="left:984px;top:410px" width="14" height="10"><path d="M1 3l4 0l-2 2.500z" fill="#d0d0d0"/><path d="M6 2.500h6M6 5h6M6 7.500h6" stroke="#c8c8c8"/></svg>
<div class="a" style="left:816px;top:427px;width:60px;height:13px;background:#5a5a5a;border:1px solid #333;font-size:10px;line-height:11px;color:#ddd;padding-left:2px">正常</div>
<div class="a" style="left:941px;top:428px;width:36px;height:13px;background:#a6a6a6;color:#4a4a4a;font-family:'Liberation Serif',serif;font-size:9.500px;line-height:13px;text-indent:-3px;overflow:hidden">100%</div>
<div class="a" style="left:979px;top:428px;width:10px;height:12px;background:#5e5e5e;border:1px solid #3a3a3a"><svg width="8" height="10" style="display:block"><path d="M2.500 2L6 5L2.500 8Z" fill="#e6e6e6"/></svg></div>
<div class="a" style="left:991px;top:422px;width:18px;height:18px;border-radius:50%;background:#4a8550"></div>
<svg class="a" style="left:816px;top:392px" width="140" height="47" viewBox="816 392 140 47">
<g fill="#d6d6d6">
<ellipse cx="848" cy="405.500" rx="5.900" ry="9" transform="rotate(5 848 405.500)"/>
<ellipse cx="864.200" cy="406" rx="6.500" ry="9.200" transform="rotate(-3 864.200 406)"/>
<ellipse cx="835.600" cy="418.400" rx="6.100" ry="8.500" transform="rotate(-10 835.600 418.400)"/>
<ellipse cx="873.600" cy="422.200" rx="6.300" ry="8.300" transform="rotate(12 873.600 422.200)"/>
<path d="M853.700 419.400C858 419.400 861 423 864 426L876 439.500L880 446L829 446L833 439.500L844 429C848 425 850 419.400 853.700 419.400Z"/>
</g>
<text x="788.500" y="441" font-family="Liberation Sans,sans-serif" font-weight="bold" font-size="25" fill="#e2e2e2" stroke="#e2e2e2" stroke-width="1">Bai</text>
<text x="842.500" y="442" font-family="Liberation Sans,sans-serif" font-weight="bold" font-size="18" fill="#474747">du</text>
<text x="884" y="449" font-family="Noto Sans CJK SC,sans-serif" font-weight="900" font-size="29" fill="#ececec" textLength="58" lengthAdjust="spacingAndGlyphs">经验</text>
</svg>
<div class="a" style="left:815px;top:439px;width:135px;height:9px;background:#474747"></div>
<div class="a" style="left:818px;top:457px;width:39px;height:39px;background:#fff"><svg width="39" height="39" style="display:block"><path d="M3.500 5C10 1.500 29 1.500 36 4L30.500 35C25 38 16 38 11.500 35Z" fill="#1c56a2"/></svg></div>
<div class="a" style="left:879px;top:457px;width:40px;height:40px;border:1px solid #9c9c9c"></div>
<svg class="a" style="left:886px;top:464px" width="26" height="26"><circle cx="13" cy="13" r="9" fill="none" stroke="#e8e8e8" stroke-width="2.400"/><path d="M6.500 6.500L19.500 19.500" stroke="#e8e8e8" stroke-width="2.400"/></svg>
<div class="a" style="left:925px;top:454px;width:54px;height:13px;background:#5c5c5c;border:1px solid #7a7a7a;font-size:9.800px;line-height:11px;color:#e6e6e6;text-align:center;white-space:nowrap;letter-spacing:.5px">制作蒙版</div>
<div class="a" style="left:860px;top:463px;width:91px;height:11px;background:#474747"></div>
<svg class="a" style="left:868px;top:457px" width="12" height="6"><path d="M1 1l3 2l-3 2z" fill="#c8c8c8"/><path d="M7.500 1.500h3v3" stroke="#c8c8c8" fill="none"/></svg>
<div class="a" style="left:938px;top:475px;font-size:9.500px;line-height:11px;color:#6c6c6c">剪切</div>
<div class="a" style="left:938px;top:491px;font-size:9.500px;line-height:12px;color:#6c6c6c;white-space:nowrap">反相蒙版</div>
<div class="a" style="left:815px;top:454px;width:45px;height:30px;overflow:hidden"><div class="a" style="left:-5.800px;top:3px;font-size:21px;line-height:24px;color:#f6f6f6;white-space:nowrap;transform:scaleX(.9);transform-origin:0 0">yan.ba</div></div>

</body></html>
